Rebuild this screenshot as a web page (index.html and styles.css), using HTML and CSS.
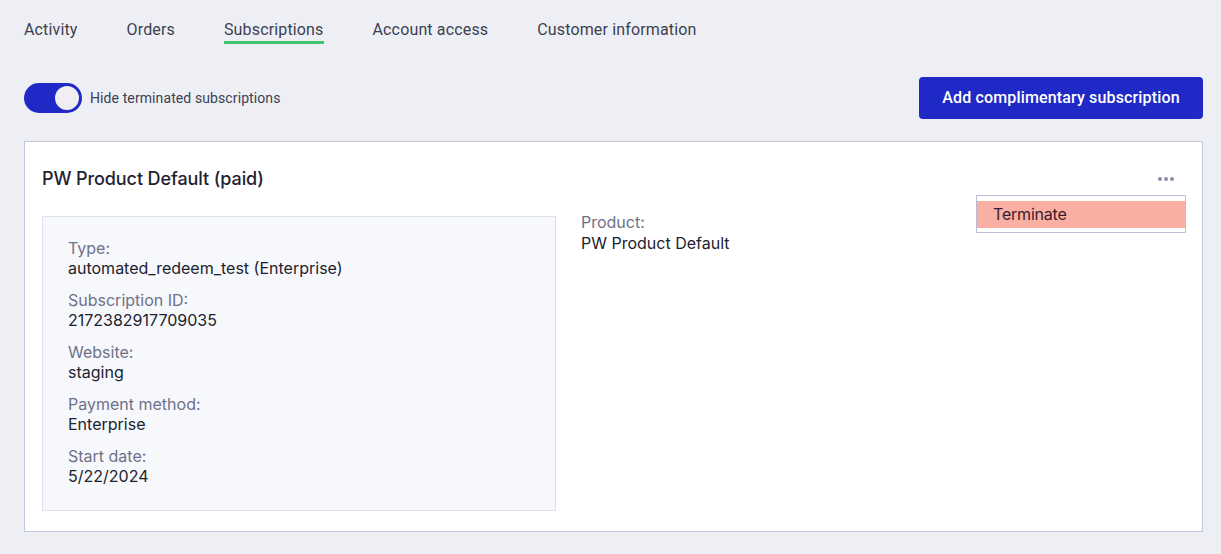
FILE: index.html
```html
<!DOCTYPE html>
<html lang="en">
<head>
<meta charset="utf-8">
<title>Subscriptions</title>
<link rel="stylesheet" href="styles.css">
</head>
<body>
<div class="page">
  <nav class="tabs">
    <a class="tab">Activity</a>
    <a class="tab">Orders</a>
    <a class="tab active">Subscriptions</a>
    <a class="tab">Account access</a>
    <a class="tab">Customer information</a>
  </nav>

  <div class="toolbar">
    <label class="toggle-wrap">
      <span class="toggle"><span class="knob"></span></span>
      <span class="toggle-label">Hide terminated subscriptions</span>
    </label>
    <button class="btn-primary">Add complimentary subscription</button>
  </div>

  <section class="card">
    <div class="card-head">
      <h2 class="card-title">PW Product Default (paid)</h2>
      <span class="dots"><i></i><i></i><i></i></span>
    </div>
    <div class="menu">
      <div class="menu-item">Terminate</div>
    </div>
    <div class="card-body">
      <div class="panel">
        <div class="field"><div class="label">Type:</div><div class="value">automated_redeem_test (Enterprise)</div></div>
        <div class="field"><div class="label">Subscription ID:</div><div class="value">2172382917709035</div></div>
        <div class="field"><div class="label">Website:</div><div class="value">staging</div></div>
        <div class="field"><div class="label">Payment method:</div><div class="value">Enterprise</div></div>
        <div class="field"><div class="label">Start date:</div><div class="value">5/22/2024</div></div>
      </div>
      <div class="side">
        <div class="field"><div class="label">Product:</div><div class="value">PW Product Default</div></div>
      </div>
    </div>
  </section>
</div>
</body>
</html>
```

FILE: styles.css
```css
* { box-sizing: border-box; }
html, body { margin: 0; padding: 0; }
body {
  background: #eeeff4;
  font-family: Inter, Roboto, "Liberation Sans", sans-serif;
  color: #20232f;
}
.page {
  padding: 0 18px 0 24px;
}
.tabs {
  display: flex;
  gap: 49px;
  padding-top: 19px;
}
.tab {
  font-family: Roboto, "Liberation Sans", sans-serif;
  font-size: 16px;
  letter-spacing: 0.15px;
  line-height: 21px;
  color: #3c3f52;
  padding-bottom: 1px;
  border-bottom: 3px solid transparent;
}
.tab.active {
  border-bottom-color: #42c46d;
}
.toolbar {
  display: flex;
  justify-content: space-between;
  align-items: center;
  margin-top: 33px;
}
.toggle-wrap {
  display: flex;
  align-items: center;
  gap: 8px;
}
.toggle {
  width: 58px;
  height: 30px;
  border-radius: 15px;
  background: #1f2ac6;
  display: flex;
  align-items: center;
  justify-content: flex-end;
  padding: 0 1px;
}
.knob {
  width: 28px;
  height: 28px;
  border-radius: 50%;
  background: #efeff3;
  border: 2px solid #1f2ac6;
}
.toggle-label {
  font-family: Roboto, "Liberation Sans", sans-serif;
  font-size: 14px;
  letter-spacing: 0.1px;
  line-height: 18px;
  color: #3c3f52;
  margin-top: -1px;
}
.btn-primary {
  width: 284px;
  height: 42px;
  border: none;
  border-radius: 4px;
  background: #1f2ac6;
  color: #ffffff;
  font-family: Roboto, "Liberation Sans", sans-serif;
  font-size: 16px;
  letter-spacing: 0.15px;
  font-weight: 500;
  padding-bottom: 3px;
}
.card {
  position: relative;
  margin-top: 22px;
  background: #ffffff;
  border: 1px solid #c5c8da;
  height: 391px;
  padding: 25px 17px 20px 17px;
}
.card-head {
  display: flex;
  justify-content: space-between;
  align-items: center;
}
.card-title {
  margin: 0;
  font-size: 18px;
  letter-spacing: -0.1px;
  line-height: 24px;
  font-weight: 500;
  color: #1f2233;
}
.dots {
  display: flex;
  gap: 2px;
  margin-right: 11px;
}
.dots i {
  width: 4px;
  height: 4px;
  border-radius: 50%;
  background: #8a8ea5;
}
.menu {
  position: absolute;
  top: 53px;
  right: 16px;
  width: 210px;
  background: #ffffff;
  border: 1px solid #b9bdd6;
  padding: 5px 0 4px;
}
.menu-item {
  background: #f9b0a2;
  color: #3a1a2c;
  font-size: 16px;
  letter-spacing: -0.2px;
  line-height: 27px;
  padding-left: 16px;
}
.card-body {
  display: flex;
  gap: 25px;
  margin-top: 25px;
}
.panel {
  width: 514px;
  height: 295px;
  background: #f7f8fc;
  border: 1px solid #dfe1ea;
  padding: 22px 25px;
  display: flex;
  flex-direction: column;
  gap: 13px;
}
.side {
  margin-top: -3px;
}
.label {
  font-size: 16px;
  line-height: 19px;
  color: #6e7189;
}
.value {
  font-size: 16px;
  line-height: 20px;
  color: #20232f;
}
.side .value {
  margin-top: 1px;
}
```
